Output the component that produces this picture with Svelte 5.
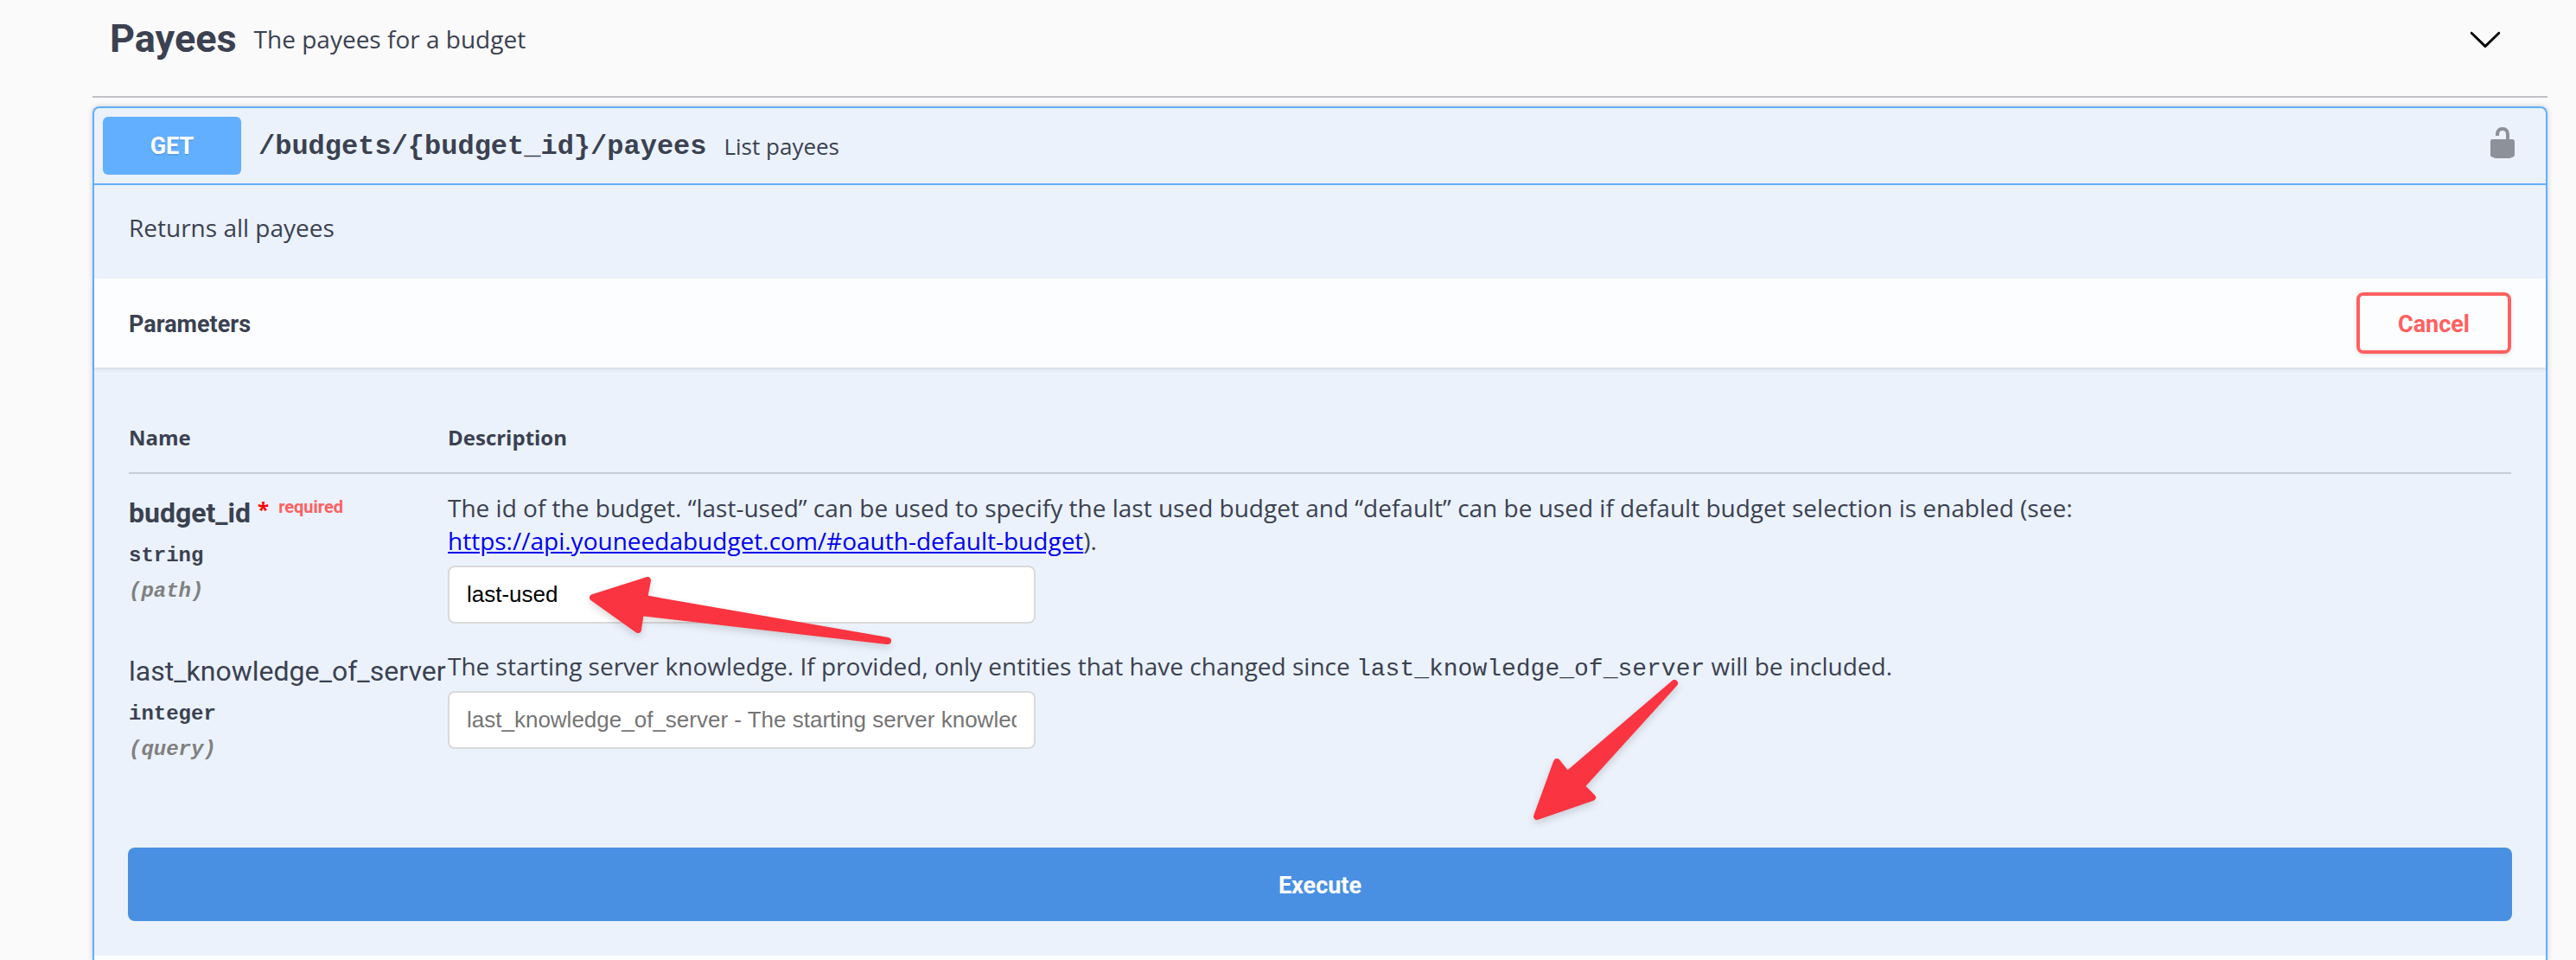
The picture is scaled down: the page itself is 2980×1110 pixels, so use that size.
<script>
  const parameters = [
    { name: 'budget_id', required: true, type: 'string', location: 'path', value: 'last-used' },
    { name: 'last_knowledge_of_server', required: false, type: 'integer', location: 'query', value: '' }
  ];
</script>

<main class="page">
  <header class="tag">
    <h2>Payees</h2>
    <p>The payees for a budget</p>
    <button class="icon-button toggle" aria-label="Collapse operation">
      <svg viewBox="0 0 20 20" width="40" height="40" aria-hidden="true">
        <path d="M17.418 6.109c.272-.268.709-.268.979 0s.271.701 0 .969l-7.908 7.83c-.27.268-.707.268-.979 0l-7.908-7.83c-.27-.268-.27-.701 0-.969.271-.268.709-.268.979 0L10 13.25l7.418-7.141z" />
      </svg>
    </button>
  </header>

  <section class="operation">
    <div class="summary">
      <span class="method">GET</span>
      <span class="path">/budgets/&#123;budget_id&#125;/payees</span>
      <span class="brief">List payees</span>
      <button class="icon-button lock" aria-label="Authorization">
        <svg viewBox="0 0 20 20" width="40" height="40" aria-hidden="true">
          <path d="M15.8 8H14V5.6C14 2.703 12.665 1 10 1 7.334 1 6 2.703 6 5.6V6h2v-.801C8 3.754 8.797 3 10 3c1.203 0 2 .754 2 2.199V8H4c-.553 0-1 .646-1 1.199V17c0 .549.428 1.139.951 1.307l1.197.387C5.672 18.861 6.55 19 7.1 19h5.8c.549 0 1.428-.139 1.951-.307l1.196-.387c.524-.167.953-.757.953-1.306V9.199C17 8.646 16.352 8 15.8 8z" />
        </svg>
      </button>
    </div>

    <p class="details">Returns all payees</p>

    <div class="section-header">
      <h4>Parameters</h4>
      <button class="cancel">Cancel</button>
    </div>

    <div class="parameters">
      <table>
        <thead>
          <tr><th class="name-column">Name</th><th>Description</th></tr>
        </thead>
        <tbody>
          {#each parameters as p}
            <tr>
              <td>
                <label class="name" class:strong={p.required} for={p.name}>{p.name}{#if p.required}<span class="star">*</span><span class="required">required</span>{/if}</label>
                <div class="type">{p.type}</div>
                <div class="location">({p.location})</div>
              </td>
              <td>
                {#if p.name === 'budget_id'}
                  <p>The id of the budget. “last-used” can be used to specify the last used budget and “default” can be used if default budget selection is enabled (see:<br /><a href="https://api.youneedabudget.com/#oauth-default-budget">https://api.youneedabudget.com/#oauth-default-budget</a>).</p>
                  <input id={p.name} type="text" value={p.value} />
                {:else}
                  <p>The starting server knowledge. If provided, only entities that have changed since <code>last_knowledge_of_server</code> will be included.</p>
                  <input id={p.name} type="text" placeholder="last_knowledge_of_server - The starting server knowledge" />
                {/if}
              </td>
            </tr>
          {/each}
        </tbody>
      </table>
      <button class="execute">Execute</button>
    </div>

    <div class="responses"></div>
  </section>

  <svg class="arrow to-input" viewBox="0 0 360 90" width="360" height="90" aria-hidden="true">
    <path d="M10 25 73 5 69 26 351 75 350 75 65 42 62 62Z" />
  </svg>
  <svg class="arrow to-execute" viewBox="0 0 180 170" width="180" height="170" aria-hidden="true">
    <path d="M8 164 31 101 43 116 167 10 59 129 72 142Z" />
  </svg>
</main>

<style>
  :global(body) {
    margin: 0;
    background: #fafafa;
  }

  .page {
    --sans: 'Open Sans', sans-serif;
    --title: Roboto, sans-serif;
    --mono: 'Liberation Mono', monospace;
    position: relative;
    display: flex;
    flex-direction: column;
    box-sizing: border-box;
    min-height: 100vh;
    padding: 0 33px 0 107px;
    overflow: hidden;
    color: #3b4151;
    font-family: var(--sans);
    font-size: 28px;
    line-height: 38px;
  }

  p, h2, h4 {
    margin: 0;
  }

  button {
    padding: 2px 0 0;
    font-family: var(--title);
    font-size: 27px;
    font-weight: 700;
    cursor: pointer;
  }

  .icon-button {
    display: flex;
    margin-left: auto;
    padding: 0;
    border: 0;
    background: none;
  }

  .tag {
    display: flex;
    align-items: center;
    gap: 20px;
    padding: 10px 52px 31px 20px;
    border-bottom: 2px solid #c0c1c5;
    margin-bottom: 10px;
  }

  .tag h2 {
    font-family: var(--title);
    font-size: 45px;
    line-height: 70px;
  }

  .operation {
    display: flex;
    flex: 1;
    flex-direction: column;
    border: 2px solid #61affe;
    border-bottom: 0;
    border-radius: 8px 8px 0 0;
    background: #ebf2fb;
    box-shadow: 0 0 6px rgba(0, 0, 0, 0.19);
  }

  .summary {
    display: flex;
    align-items: center;
    padding: 10px;
    border-bottom: 2px solid #61affe;
  }

  .method {
    width: 160px;
    padding-top: 2px;
    border-radius: 6px;
    background: #61affe;
    color: #fff;
    font-family: var(--title);
    font-size: 27px;
    font-weight: 700;
    line-height: 65px;
    text-align: center;
    text-shadow: 0 2px 0 rgba(0, 0, 0, 0.1);
  }

  .path {
    padding: 2px 20px 0;
    font-family: var(--mono);
    font-size: 32px;
    font-weight: 700;
  }

  .brief {
    font-size: 26px;
  }

  .lock {
    margin-right: 20px;
    padding-bottom: 8px;
    fill: #8d919a;
  }

  .details {
    padding: 30px 40px 40px;
  }

  .section-header {
    display: flex;
    align-items: center;
    justify-content: space-between;
    padding: 16px 40px;
    background: #fcfdff;
    box-shadow: 0 2px 4px rgba(0, 0, 0, 0.1);
  }

  h4 {
    padding-top: 2px;
    font-family: var(--title);
    font-size: 27px;
  }

  .cancel {
    width: 179px;
    height: 71px;
    border: 4px solid #ff6060;
    border-radius: 8px;
    background: transparent;
    box-shadow: 0 2px 4px rgba(0, 0, 0, 0.1);
    color: #ff6060;
  }

  .parameters {
    display: flex;
    flex-direction: column;
    padding: 40px 39px;
  }

  table {
    width: 100%;
    border-collapse: collapse;
    table-layout: fixed;
  }

  .parameters table {
    padding: 0 1px;
    border-collapse: separate;
    border-spacing: 0;
  }

  th {
    padding: 24px 0;
    border-bottom: 2px solid #c5cdd8;
    font-size: 24px;
    line-height: 33px;
    text-align: left;
  }

  .name-column {
    width: 369px;
  }

  td {
    padding: 20px 0 10px;
    vertical-align: top;
  }

  .name {
    display: block;
    padding-bottom: 4px;
    font-family: var(--title);
    font-size: 32px;
    line-height: 50px;
    white-space: nowrap;
  }

  .strong {
    font-weight: 700;
  }

  .star,
  .required {
    line-height: 20px;
    vertical-align: 11px;
  }

  .star {
    padding: 0 11px 0 8px;
    color: #f00;
    font-family: var(--sans);
    font-size: 24px;
    vertical-align: 6px;
  }

  .required {
    color: #ff6060;
    font-size: 20px;
  }

  .type,
  .location {
    font-family: var(--mono);
    font-size: 24px;
    font-weight: 700;
    line-height: 41px;
  }

  .location {
    color: #808080;
    font-style: italic;
  }

  a {
    color: #00e;
  }

  code {
    font-family: var(--mono);
    font-size: 28px;
    line-height: 28px;
  }

  input {
    display: block;
    box-sizing: border-box;
    width: 680px;
    height: 67px;
    margin-top: 10px;
    padding: 0 20px;
    border: 2px solid #d9d9d9;
    border-radius: 8px;
    background: #fff;
    color: #000;
    font-family: 'Liberation Sans', sans-serif;
    font-size: 26px;
  }

  input::placeholder {
    color: #757575;
  }

  .execute {
    height: 85px;
    margin-top: 83px;
    border: 0;
    border-radius: 8px;
    background: #4990e2;
    color: #fff;
  }

  .responses {
    flex: 1;
    background: #fcfdff;
  }

  .arrow {
    position: absolute;
    overflow: visible;
    fill: #fa3440;
    stroke: #fa3440;
    stroke-width: 8px;
    stroke-linejoin: round;
    filter: drop-shadow(0 4px 4px rgba(0, 0, 0, 0.15));
  }

  .to-input {
    top: 666px;
    left: 676px;
  }

  .to-execute {
    top: 780px;
    left: 1770px;
  }
</style>
